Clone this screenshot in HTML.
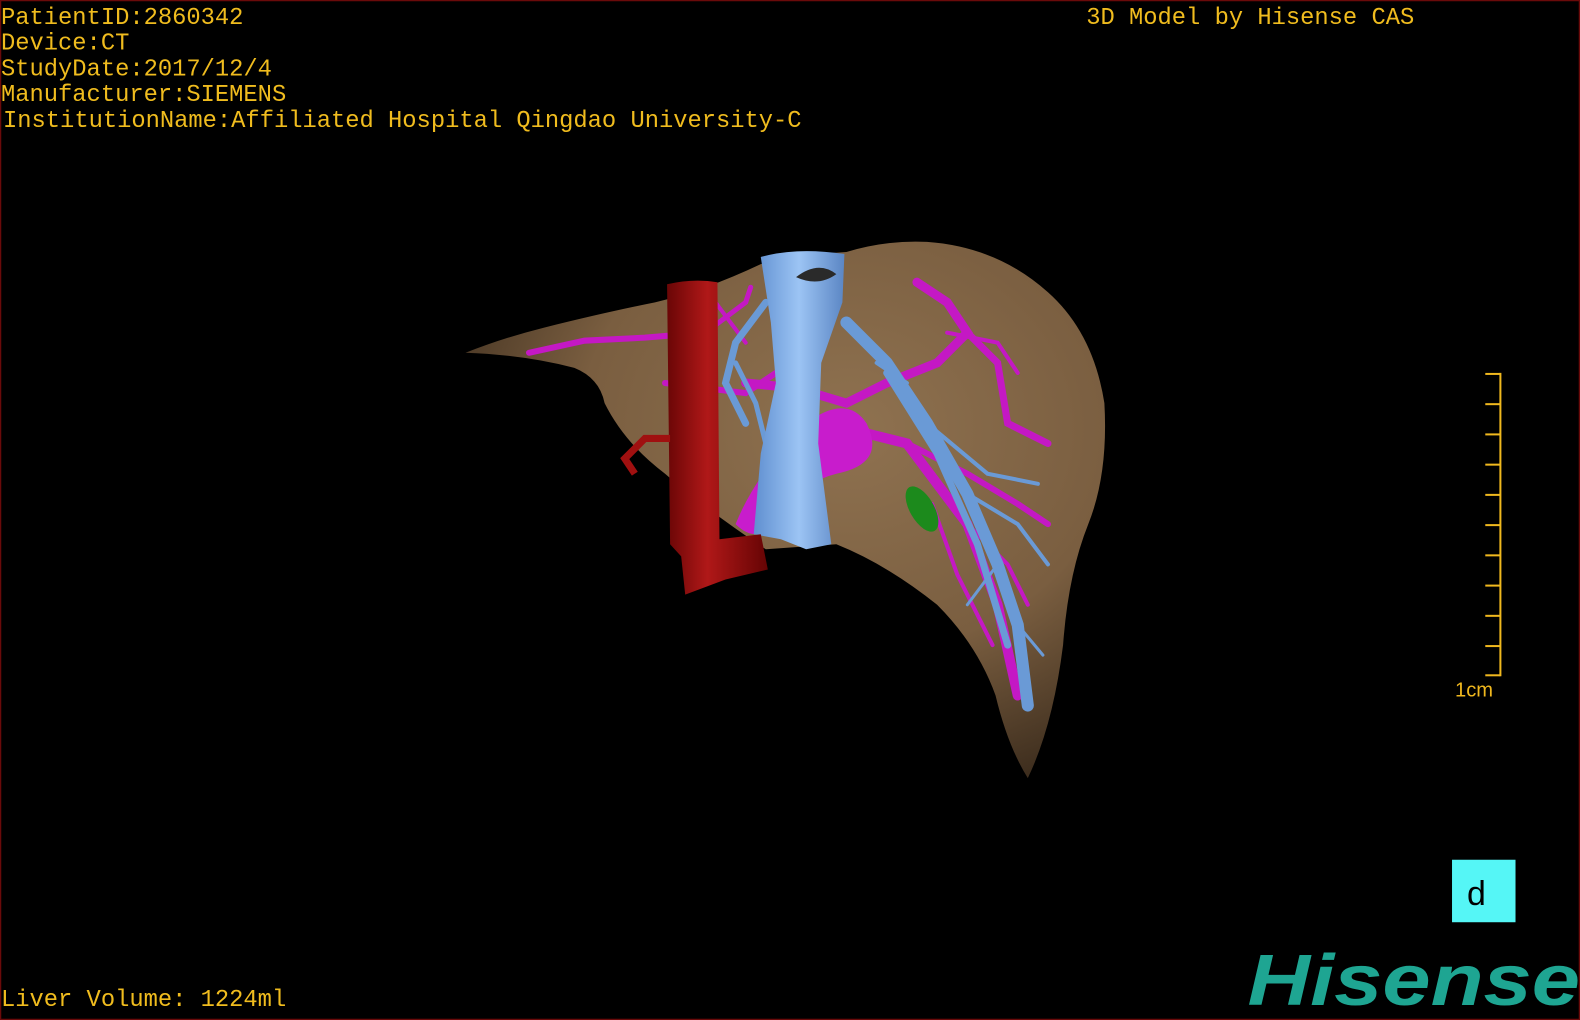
<!DOCTYPE html>
<html><head><meta charset="utf-8"><style>
html,body{margin:0;padding:0;background:#000;width:1580px;height:1020px;overflow:hidden}
svg{display:block}
text{font-family:"Liberation Mono",monospace}
</style></head><body>
<svg width="1580" height="1020" viewBox="0 0 1568 1012" preserveAspectRatio="none" xmlns="http://www.w3.org/2000/svg">
<defs>
<radialGradient id="lv" cx="0.6" cy="0.35" r="0.7">
<stop offset="0" stop-color="#8f7250"/><stop offset="0.6" stop-color="#7a5e40"/><stop offset="1" stop-color="#3e2e1e"/>
</radialGradient>
<linearGradient id="ivc" x1="0" x2="1"><stop offset="0" stop-color="#5f8fd0"/><stop offset="0.5" stop-color="#9cc4f4"/><stop offset="1" stop-color="#5b86c4"/></linearGradient>
<linearGradient id="ao" x1="0" x2="1"><stop offset="0" stop-color="#6a0606"/><stop offset="0.4" stop-color="#b01818"/><stop offset="1" stop-color="#650404"/></linearGradient>
</defs>
<rect x="0" y="0" width="1568" height="1012" fill="#000"/>
<rect x="0.5" y="0.5" width="1567" height="1011" fill="none" stroke="#6a0a0a" stroke-width="1.5"/>
<!-- liver -->
<path d="M462,350 Q500,335 540,325 Q600,310 650,300 Q700,288 755,262 Q800,252 840,250 Q880,238 920,240 Q990,245 1040,290 Q1085,330 1096,400 Q1100,470 1080,520 Q1060,570 1055,640 Q1045,720 1020,772 Q1000,740 988,690 Q970,640 930,600 Q880,560 830,540 L760,545 Q700,505 660,470 Q620,440 600,400 Q595,375 570,365 Q520,352 462,350 Z" fill="url(#lv)"/>
<!-- magenta portal -->
<g stroke="#c418c4" fill="none" stroke-linecap="round">
<path d="M525,350 L580,338 L640,335 L700,330" stroke-width="6"/>
<path d="M700,330 L740,300 L745,285" stroke-width="5"/>
<path d="M740,380 L790,385 L840,400 L880,380 L930,360 L960,330 L940,300 L910,280" stroke-width="9"/>
<path d="M960,330 L990,360 L1000,420 L1040,440" stroke-width="7"/>
<path d="M820,440 L860,430 L900,440 L930,480 L960,520 L990,600 L1010,690" stroke-width="10"/>
<path d="M900,440 L960,470 L1010,500 L1040,520" stroke-width="6"/>
<path d="M940,330 L990,340 L1010,370" stroke-width="4"/>
<path d="M660,380 L740,390 L770,370" stroke-width="6"/>
<path d="M710,300 L740,340" stroke-width="4"/>
<path d="M960,520 L1000,560 L1020,600" stroke-width="4"/>
<path d="M925,500 L950,570 L985,640" stroke-width="4"/>
</g>
<path d="M730,520 Q750,470 800,420 Q840,390 860,420 Q880,460 830,470 Q790,480 770,520 Q750,540 730,520 Z" fill="#c81ccc"/>
<ellipse cx="915" cy="505" rx="12" ry="25" fill="#1c8a1c" transform="rotate(-30 915 505)"/>
<!-- blue hepatic veins -->
<g stroke="#6a9ad6" fill="none" stroke-linecap="round">
<path d="M840,320 L880,360 L920,420 L960,490 L990,560 L1010,620 L1020,700" stroke-width="12"/>
<path d="M880,370 L930,450 L970,540 L1000,640" stroke-width="7"/>
<path d="M760,300 L730,340 L720,380 L740,420" stroke-width="7"/>
<path d="M730,360 L750,400 L760,440" stroke-width="5"/>
<path d="M920,420 L980,470 L1030,480" stroke-width="4"/>
<path d="M960,490 L1010,520 L1040,560" stroke-width="4"/>
<path d="M990,560 L960,600" stroke-width="3"/>
<path d="M1010,620 L1035,650" stroke-width="3"/>
<path d="M870,360 L900,380" stroke-width="4"/>
</g>
<!-- IVC -->
<path d="M755,255 Q790,245 838,252 L836,300 L815,360 L812,440 L825,540 L800,545 L775,535 L748,530 L755,450 L770,380 L765,320 Z" fill="url(#ivc)"/>
<path d="M790,275 Q812,258 830,272 Q812,285 790,275 Z" fill="#2a2a2a"/>
<!-- aorta -->
<path d="M662,282 Q688,276 712,280 L714,535 L755,530 L762,565 L720,575 L680,590 L676,552 L665,540 Z" fill="url(#ao)"/>
<path d="M665,435 L640,435 L620,455 L630,470" stroke="#a01010" stroke-width="7" fill="none"/>
<!-- text -->
<g fill="#f0bc1e" font-size="23.6">
<text x="1" y="24">PatientID:2860342</text>
<text x="1" y="49">Device:CT</text>
<text x="1" y="75">StudyDate:2017/12/4</text>
<text x="1" y="100">Manufacturer:SIEMENS</text>
<text x="3" y="126">InstitutionName:Affiliated Hospital Qingdao University-C</text>
<text x="1078" y="24">3D Model by Hisense CAS</text>
<text x="1" y="998">Liver Volume: 1224ml</text>
</g>
<!-- scale -->
<g stroke="#f0b81e" stroke-width="2">
<line x1="1489" y1="370" x2="1489" y2="671"/>
<line x1="1474" y1="371" x2="1489" y2="371"/><line x1="1474" y1="401" x2="1489" y2="401"/>
<line x1="1474" y1="431" x2="1489" y2="431"/><line x1="1474" y1="461" x2="1489" y2="461"/>
<line x1="1474" y1="491" x2="1489" y2="491"/><line x1="1474" y1="521" x2="1489" y2="521"/>
<line x1="1474" y1="551" x2="1489" y2="551"/><line x1="1474" y1="581" x2="1489" y2="581"/>
<line x1="1474" y1="611" x2="1489" y2="611"/><line x1="1474" y1="641" x2="1489" y2="641"/>
<line x1="1474" y1="670" x2="1489" y2="670"/>
</g>
<text x="1444" y="691" fill="#f0b81e" font-size="20" style="font-family:'Liberation Sans',sans-serif">1cm</text>
<!-- d button -->
<rect x="1441" y="853" width="63" height="62" fill="#55f6f6"/>
<text x="1455" y="898" font-size="34" fill="#000">d</text>
<!-- Hisense -->
<text x="1238" y="997" font-size="72" font-weight="bold" font-style="italic" fill="#1ea592" textLength="330" lengthAdjust="spacingAndGlyphs" style="font-family:'Liberation Sans',sans-serif">Hisense</text>
</svg>
</body></html>
